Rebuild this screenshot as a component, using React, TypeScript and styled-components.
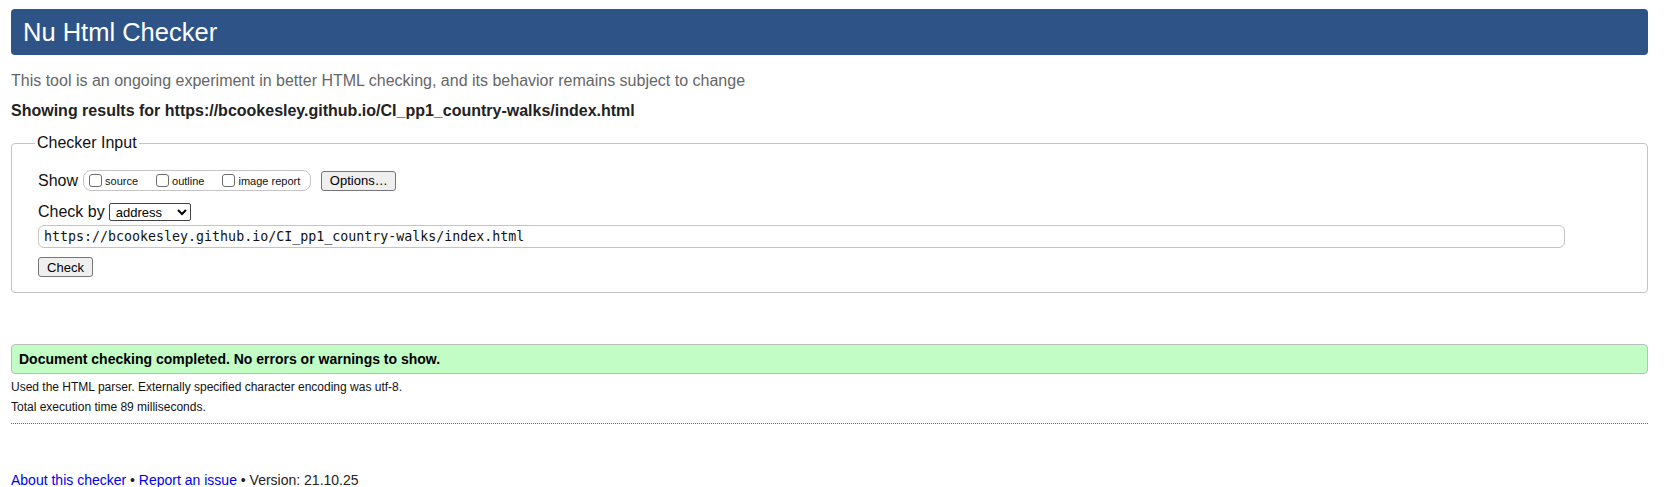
import React from "react";
import styled, { createGlobalStyle } from "styled-components";

const GlobalStyle = createGlobalStyle`
  html, body { margin: 0; padding: 0; background: #fff; }
  body { font-family: "Liberation Sans", Arial, sans-serif; color: #111; }
`;

const Page = styled.div`
  padding: 9px 25px 0 11px;
`;

const Header = styled.h1`
  margin: 0;
  height: 46px;
  line-height: 46px;
  padding: 0 12px;
  background: #2e5487;
  color: #fff;
  font-size: 25.5px;
  font-weight: normal;
  border-radius: 4px;
`;

const Intro = styled.p`
  margin: 17px 0 0;
  font-size: 16px;
  line-height: 18px;
  color: #666;
`;

const Results = styled.p`
  margin: 12px 0 0;
  font-size: 16px;
  line-height: 18px;
  font-weight: bold;
  color: #222;
`;

const Fieldset = styled.fieldset`
  margin: 14px 0 0;
  padding: 18px 25px 15px 26px;
  border: 1px solid #c4c4c4;
  border-radius: 4px;
  min-inline-size: 0;
`;

const Legend = styled.legend`
  padding: 0 2px;
  margin-left: -3px;
  font-size: 16px;
  line-height: 18px;
  color: #111;
`;

const Row = styled.div<{ $top?: number }>`
  display: flex;
  align-items: center;
  margin-top: ${(p) => p.$top ?? 0}px;
  font-size: 16px;
`;

const Label = styled.span<{ $gap: number }>`
  margin-right: ${(p) => p.$gap}px;
`;

const Group = styled.div`
  display: flex;
  align-items: center;
  gap: 18px;
  height: 19px;
  padding: 0 10px 0 5px;
  border: 1px solid #c4c4c4;
  border-radius: 8px;
`;

const Option = styled.label`
  display: flex;
  align-items: center;
  gap: 3px;
  font-size: 11px;
  color: #111;
`;

const Box = styled.input`
  appearance: none;
  margin: 0;
  width: 13px;
  height: 13px;
  border: 1px solid #6e6e6e;
  border-radius: 3px;
  background: #fff;
`;

const Button = styled.button<{ $w: number }>`
  width: ${(p) => p.$w}px;
  height: 20px;
  padding: 0;
  font-family: "Liberation Sans", Arial, sans-serif;
  font-size: 13px;
  color: #000;
  background: #efefef;
  border: 1px solid #767676;
  border-radius: 3px;
`;

const OptionsButton = styled(Button)`
  margin-left: 10px;
`;

const Select = styled.select`
  margin-left: 4px;
  width: 82px;
  height: 18px;
  padding: 0 2px;
  font-family: "Liberation Sans", Arial, sans-serif;
  font-size: 13px;
  color: #000;
  background: #fff;
  border: 1px solid #444;
  border-radius: 2px;
`;

const UrlField = styled.div`
  box-sizing: border-box;
  width: 1527px;
  height: 23px;
  margin-top: 4px;
  padding: 0 5px;
  line-height: 21px;
  font-family: "DejaVu Sans Mono", Menlo, monospace;
  font-size: 13.3px;
  color: #111;
  white-space: nowrap;
  overflow: hidden;
  border: 1px solid #c4c4c4;
  border-radius: 6px;
  background: #fff;
`;

const Success = styled.div`
  margin-top: 51px;
  height: 28px;
  line-height: 28px;
  padding: 0 7px;
  background: #c2fdc6;
  border: 1px solid #bdbdbd;
  border-radius: 4px;
  font-size: 14px;
  font-weight: bold;
  color: #000;
`;

const Detail = styled.p<{ $top: number }>`
  margin: ${(p) => p.$top}px 0 0;
  font-size: 12px;
  line-height: 14px;
  color: #111;
`;

const Divider = styled.hr`
  margin: 9px 0 0;
  border: 0;
  border-top: 1px dotted #666;
  height: 0;
`;

const Footer = styled.p`
  margin: 48px 0 0;
  font-size: 14px;
  line-height: 16px;
  color: #222;
`;

const Link = styled.a`
  color: #0000ee;
  text-decoration: none;
`;

export default function App() {
  return (
    <>
      <GlobalStyle />
      <Page>
        <Header>Nu Html Checker</Header>
        <Intro>
          This tool is an ongoing experiment in better HTML checking, and its behavior remains subject to change
        </Intro>
        <Results>Showing results for https://bcookesley.github.io/CI_pp1_country-walks/index.html</Results>
        <Fieldset>
          <Legend>Checker Input</Legend>
          <Row>
            <Label $gap={5}>Show</Label>
            <Group>
              <Option>
                <Box type="checkbox" />
                source
              </Option>
              <Option>
                <Box type="checkbox" />
                outline
              </Option>
              <Option>
                <Box type="checkbox" />
                image report
              </Option>
            </Group>
            <OptionsButton $w={75}>Options…</OptionsButton>
          </Row>
          <Row $top={12}>
            <Label $gap={0}>Check by</Label>
            <Select defaultValue="address">
              <option value="address">address</option>
              <option value="file">file upload</option>
              <option value="text">text input</option>
            </Select>
          </Row>
          <UrlField role="textbox">https://bcookesley.github.io/CI_pp1_country-walks/index.html</UrlField>
          <Row $top={9}>
            <Button $w={55}>Check</Button>
          </Row>
        </Fieldset>
        <Success>Document checking completed. No errors or warnings to show.</Success>
        <Detail $top={6}>Used the HTML parser. Externally specified character encoding was utf-8.</Detail>
        <Detail $top={6}>Total execution time 89 milliseconds.</Detail>
        <Divider />
        <Footer>
          <Link href="#">About this checker</Link> • <Link href="#">Report an issue</Link> • Version: 21.10.25
        </Footer>
      </Page>
    </>
  );
}
